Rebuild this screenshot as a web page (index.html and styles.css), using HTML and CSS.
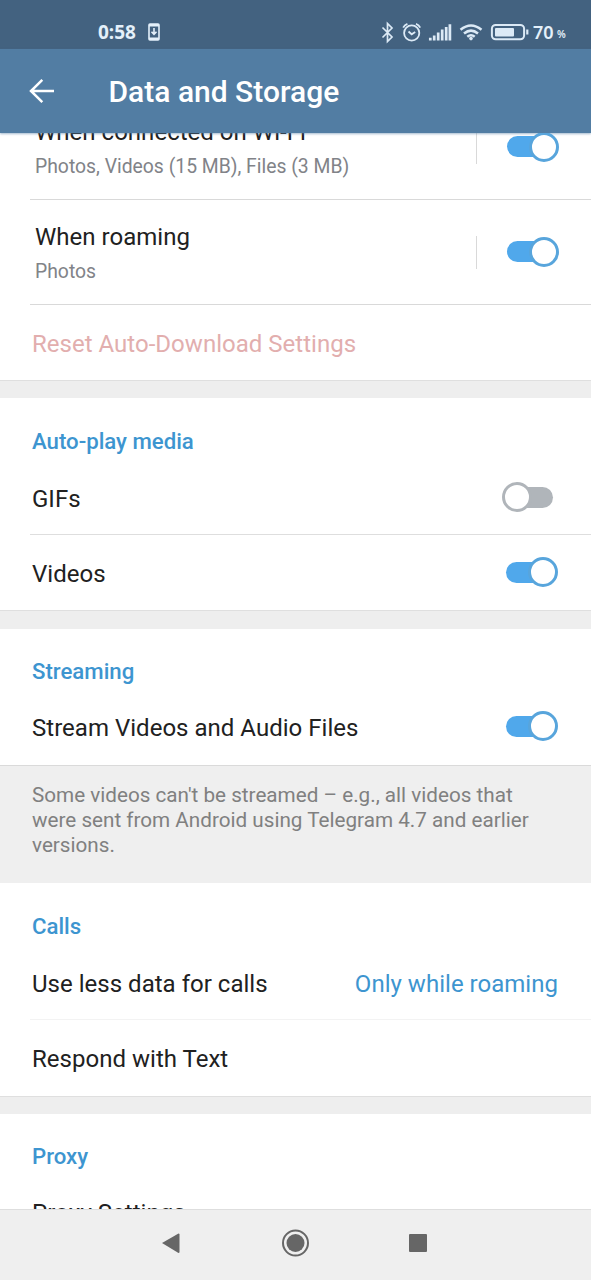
FILE: index.html
```html
<!DOCTYPE html>
<html lang="en">
<head>
<meta charset="utf-8">
<title>Data and Storage</title>
<link rel="stylesheet" href="styles.css">
</head>
<body>
<div class="screen">
  <header class="status">
    <span class="clock">0:58</span>
    <svg class="download" width="12" height="18" viewBox="0 0 12 18"><rect x="1" y="1" width="10" height="16" rx="1" fill="none" stroke="#e4f0fa" stroke-width="1.6"/><path d="M1 2.2h10M1 15.8h10" stroke="#e4f0fa" stroke-width="2.4"/><path d="M6 5v6M3.5 8.8 6 11.4l2.5-2.6" fill="none" stroke="#e4f0fa" stroke-width="1.6"/></svg>
    <svg class="system" width="150" height="24" viewBox="380 20 150 24" fill="none" stroke="#dceaf6">
      <path d="M382.5 27.500l9.500 9.500-4.500 4.500V23.500l4.500 4.500-9.500 9.500" stroke-width="1.7"/>
      <circle cx="411.700" cy="33" r="7.600" stroke-width="1.800"/>
      <path d="M408.500 31.500l3.200 2.800 3.500-2.300M403.200 27.600q1.200-2.700 4.200-3.800M420.200 27.600q-1.200-2.700-4.200-3.800" stroke-width="1.800"/>
      <path d="M430.300 37.800V40.500M434.200 35.500V40.500M438.200 32.500V40.500M442.200 29.500V40.500M446.200 27V40.500M449.900 24.300V40.500" stroke-width="2.700"/>
      <path d="M460.500 29.700q10.500-8.500 21 0M464 33.500q7-5.800 14 0M467.300 36.800q3.700-3 7.400 0" stroke-width="2.500"/>
      <circle cx="471" cy="38.600" r="1.800" fill="#dceaf6" stroke="none"/>
      <rect x="491.900" y="24.900" width="32.200" height="14.400" rx="3.800" stroke-width="2"/>
      <rect x="495" y="28" width="19" height="8.500" rx="1" fill="#dceaf6" stroke="none"/>
      <path d="M527.300 29.500v5" stroke-width="2.200"/>
    </svg>
    <span class="battery">70</span><span class="percent">%</span>
  </header>
  <div class="appbar">
    <svg width="26" height="26" viewBox="0 0 26 26" fill="none" stroke="#fff" stroke-width="2.500"><path d="M25 13H3M13.300 1.800 2 13l11.300 11.200"/></svg>
    <h1 class="title">Data and Storage</h1>
  </div>
  <main class="list">
    <div class="row double first">
      <div class="texts"><div class="name">When connected on Wi-Fi</div><div class="detail">Photos, Videos (15 MB), Files (3 MB)</div></div>
      <i class="bar"></i><span class="toggle on"></span>
    </div>
    <div class="row double">
      <div class="texts"><div class="name">When roaming</div><div class="detail">Photos</div></div>
      <i class="bar"></i><span class="toggle on"></span>
    </div>
    <div class="row last low reset"><span>Reset Auto-Download Settings</span></div>
    <div class="gap"></div>
    <h2 class="heading">Auto-play media</h2>
    <div class="row low"><span>GIFs</span><span class="toggle off"></span></div>
    <div class="row last low"><span>Videos</span><span class="toggle on"></span></div>
    <div class="gap tall"></div>
    <h2 class="heading short">Streaming</h2>
    <div class="row last"><span>Stream Videos and Audio Files</span><span class="toggle on"></span></div>
    <p class="info">Some videos can't be streamed – e.g., all videos that<br>were sent from Android using Telegram 4.7 and earlier<br>versions.</p>
    <h2 class="heading">Calls</h2>
    <div class="row low faint"><span>Use less data for calls</span><span class="value">Only while roaming</span></div>
    <div class="row last respond"><span>Respond with Text</span></div>
    <div class="gap"></div>
    <h2 class="heading short">Proxy</h2>
    <div class="row last"><span>Proxy Settings</span></div>
  </main>
  <nav class="nav">
    <svg width="591" height="70" viewBox="0 0 591 70" fill="#666"><path d="M162 33 178.500 23.500q1 0 1 1v17.500q0 1-1 1L162 33z"/><circle cx="295.500" cy="33" r="9"/><circle cx="295.500" cy="33" r="12.500" fill="none" stroke="#666" stroke-width="2"/><rect x="409" y="24" width="18" height="18" rx="1"/></svg>
  </nav>
</div>
</body>
</html>
```
FILE: styles.css
```css
*, *::before, *::after { box-sizing: border-box; }
body { margin: 0; font-family: Roboto, sans-serif; color: #212121; background: #fff; }
.screen { width: 591px; height: 1280px; display: flex; flex-direction: column; overflow: hidden; }
.status { height: 49px; flex: none; background: #436280; display: flex; align-items: center; padding: 16px 0 0 98px; color: #e4f0fa; }
.status > * { flex: none; }
.clock { width: 50px; height: 33px; font: 700 19px/33px "Noto Sans", sans-serif; }
.download { margin-top: -1px; }
.system { margin: -1px 0 0 220px; }
.battery { width: 24px; height: 33px; margin-left: 3px; font: 600 18px/33px "Noto Sans", sans-serif; }
.percent { height: 33px; font: 600 10px/37px "Noto Sans", sans-serif; }
.appbar { height: 84px; flex: none; background: #527da3; display: flex; align-items: center; padding-left: 29px; gap: 53.5px; position: relative; box-shadow: 0 1px 2px #527da388; }
.title { margin: 0; padding-top: 2px; font-size: 30px; line-height: 36px; font-weight: 500; color: #fff; }
.list { height: 1076px; flex: none; overflow: hidden; }
.row { height: 75px; margin-left: 30px; padding: 2px 33px 0 2px; border-bottom: 1px solid #dedede; display: flex; align-items: center; justify-content: space-between; font-size: 24px; line-height: 30px; letter-spacing: .02px; white-space: nowrap; }
.row.last { border-bottom-color: transparent; }
.row.low { padding-top: 4px; }
.row.respond { height: 76px; }
.row.faint { border-bottom-color: #f3f3f3; }
.double { height: 105px; padding: 0 32px 0 5px; justify-content: flex-start; border-color: #d9d9d9; }
.first { margin-top: -38px; }
.texts { flex: 1; padding-top: 3px; }
.detail { font-size: 19.35px; line-height: 26px; letter-spacing: 0; margin-top: 7px; color: #818388; }
.bar { width: 1px; height: 33px; background: #d9d9d9; margin-right: 30px; }
.reset { color: #e2aeae; }
.toggle { width: 52px; height: 30px; flex: none; display: flex; align-items: center; position: relative; margin-top: -4px; }
.double .toggle { margin-top: -1px; }
.toggle::before { content: ""; width: 44px; height: 21px; border-radius: 11px; background: #50a8eb; }
.toggle::after { content: ""; position: absolute; right: 0; width: 30px; height: 30px; border: 3px solid #58a5dc; border-radius: 50%; background: #fff; }
.off { margin-right: 5px; }
.off::before { margin-left: 8px; background: #b0b5ba; }
.off::after { right: 21px; border-color: #b0b5ba; }
.gap { height: 18px; background: #eee; border-top: 1px solid #dfdfdf; }
.gap.tall { height: 19px; }
.heading { margin: 0; height: 62px; padding: 29px 32px 0; font-size: 22.2px; line-height: 28px; font-weight: 500; color: #3d95d0; }
.heading.short { height: 61px; padding-top: 28px; }
.info { margin: 0; height: 118px; padding: 17px 32px 0; background: #efefef; border-top: 1px solid #dadada; font-size: 20.68px; line-height: 24.8px; color: #808080; white-space: nowrap; }
.value { color: #3d95d0; }
.nav { height: 71px; flex: none; background: #efefef; border-top: 1px solid #dedede; }
.nav svg { display: block; }
```
